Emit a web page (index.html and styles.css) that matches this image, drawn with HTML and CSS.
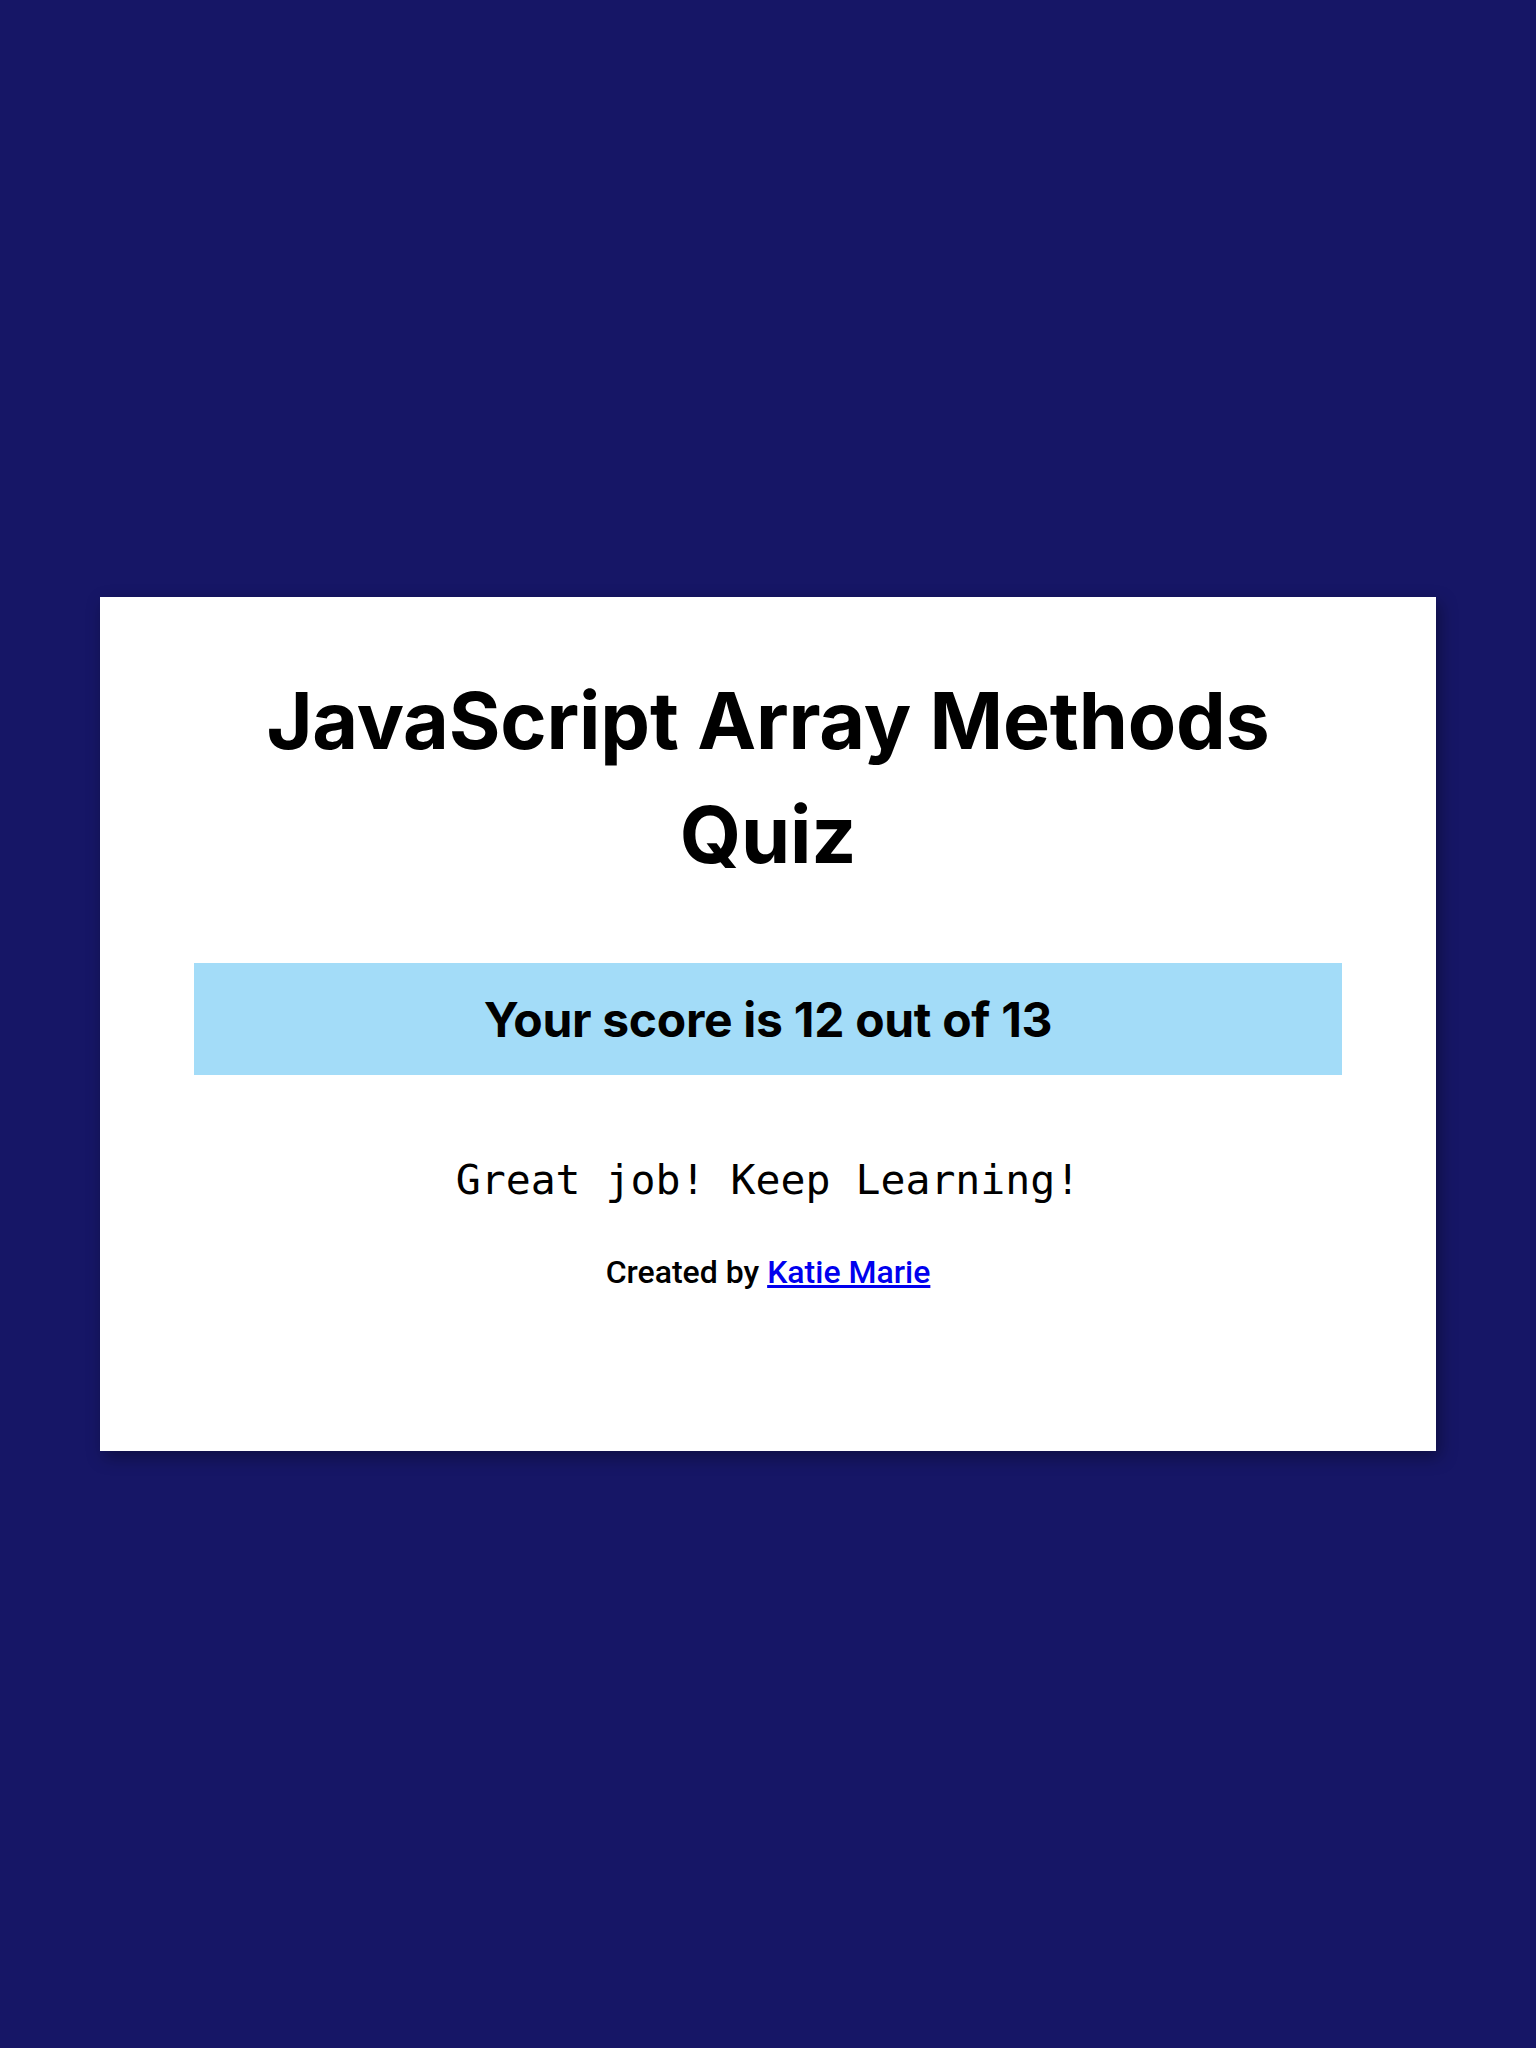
FILE: index.html
```html
<!DOCTYPE html>
<html lang="en">
<head>
<meta charset="UTF-8">
<title>JavaScript Array Methods Quiz</title>
<link rel="stylesheet" href="styles.css">
</head>
<body>
<main class="card">
  <h1 class="title">JavaScript Array Methods Quiz</h1>
  <div class="score">
    <h2 class="score-text">Your score is 12 out of 13</h2>
  </div>
  <p class="message">Great job! Keep Learning!</p>
  <p class="credit">Created by <a href="#" class="credit-link">Katie Marie</a></p>
</main>
</body>
</html>
```
FILE: styles.css
```css
* { box-sizing: border-box; }
html, body { margin: 0; padding: 0; }
body {
  background: #161666;
  min-height: 100vh;
  display: flex;
  align-items: center;
  justify-content: center;
  font-family: "Inter", "Noto Sans", sans-serif;
}
.card {
  width: 87%;
  height: 854px;
  background: #ffffff;
  box-shadow: 4px 6px 16px rgba(0, 0, 0, 0.35);
  padding: 66px 94px 0;
  display: flex;
  flex-direction: column;
  align-items: center;
}
.title {
  margin: 0;
  max-width: 1080px;
  text-align: center;
  font-size: 79px;
  line-height: 114px;
  font-weight: 700;
  color: #000;
  letter-spacing: -0.2px;
}
.score {
  width: 100%;
  margin-top: 72px;
  height: 112px;
  background: #a3dcf8;
  display: flex;
  align-items: center;
  justify-content: center;
}
.score-text {
  margin: 0;
  font-size: 48px;
  font-weight: 700;
  letter-spacing: -0.3px;
}
.message {
  margin: 80px 0 0;
  font-family: "DejaVu Sans Mono", monospace;
  font-size: 41.5px;
  color: #000;
}
.credit {
  margin: 49px 0 0;
  font-family: "Roboto", sans-serif;
  font-weight: 500;
  font-size: 32px;
  color: #000;
}
.credit-link { color: #0000ee; }
```
